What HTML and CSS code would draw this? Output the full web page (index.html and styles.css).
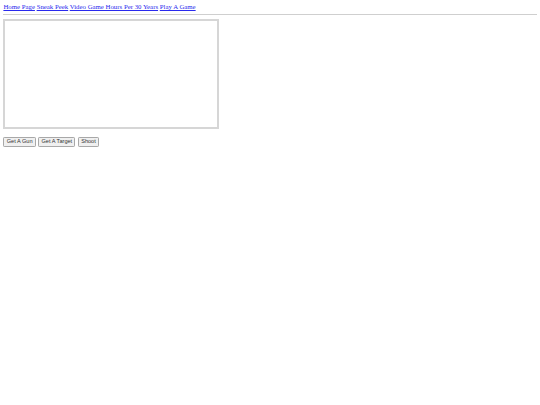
FILE: index.html
```html
<!DOCTYPE html>
<html>
<head>
<meta charset="utf-8">
<link rel="stylesheet" href="styles.css">
</head>
<body>
<nav class="nav">
<a href="#">Home Page</a> <a href="#">Sneak Peek</a> <a href="#">Video Game Hours Per 30 Years</a> <a href="#">Play A Game</a>
</nav>
<hr class="rule">
<div class="stage"></div>
<div class="controls">
<button class="btn">Get A Gun</button>
<button class="btn">Get A Target</button>
<button class="btn">Shoot</button>
</div>
</body>
</html>
```
FILE: styles.css
```css
html, body { background: #fff; }
body {
  margin: 3.4px;
  font-family: "Liberation Serif", "Times New Roman", serif;
  font-size: 6.8px;
}
.nav {
  line-height: 8.3px;
  white-space: nowrap;
}
.nav a {
  color: #2a2aee;
  text-decoration: underline;
}
.rule {
  margin: 2.4px 0 0;
  height: 0;
  border: 0;
  border-top: 1px solid #cfcfcf;
}
.stage {
  margin-top: 3.6px;
  width: 212px;
  height: 106px;
  border: 2px solid #d6d6d6;
  background: #fff;
}
.controls {
  margin-top: 8.4px;
  display: flex;
  gap: 2.4px;
}
.btn {
  font-family: "Liberation Sans", Arial, sans-serif;
  font-size: 5.6px;
  font-weight: normal;
  line-height: 7.2px;
  padding: 0.4px 2.3px;
  margin: 0;
  border: 0.8px solid #a8a8a8;
  border-radius: 1.2px;
  background: #f0f0f0;
  color: #333;
}
```
